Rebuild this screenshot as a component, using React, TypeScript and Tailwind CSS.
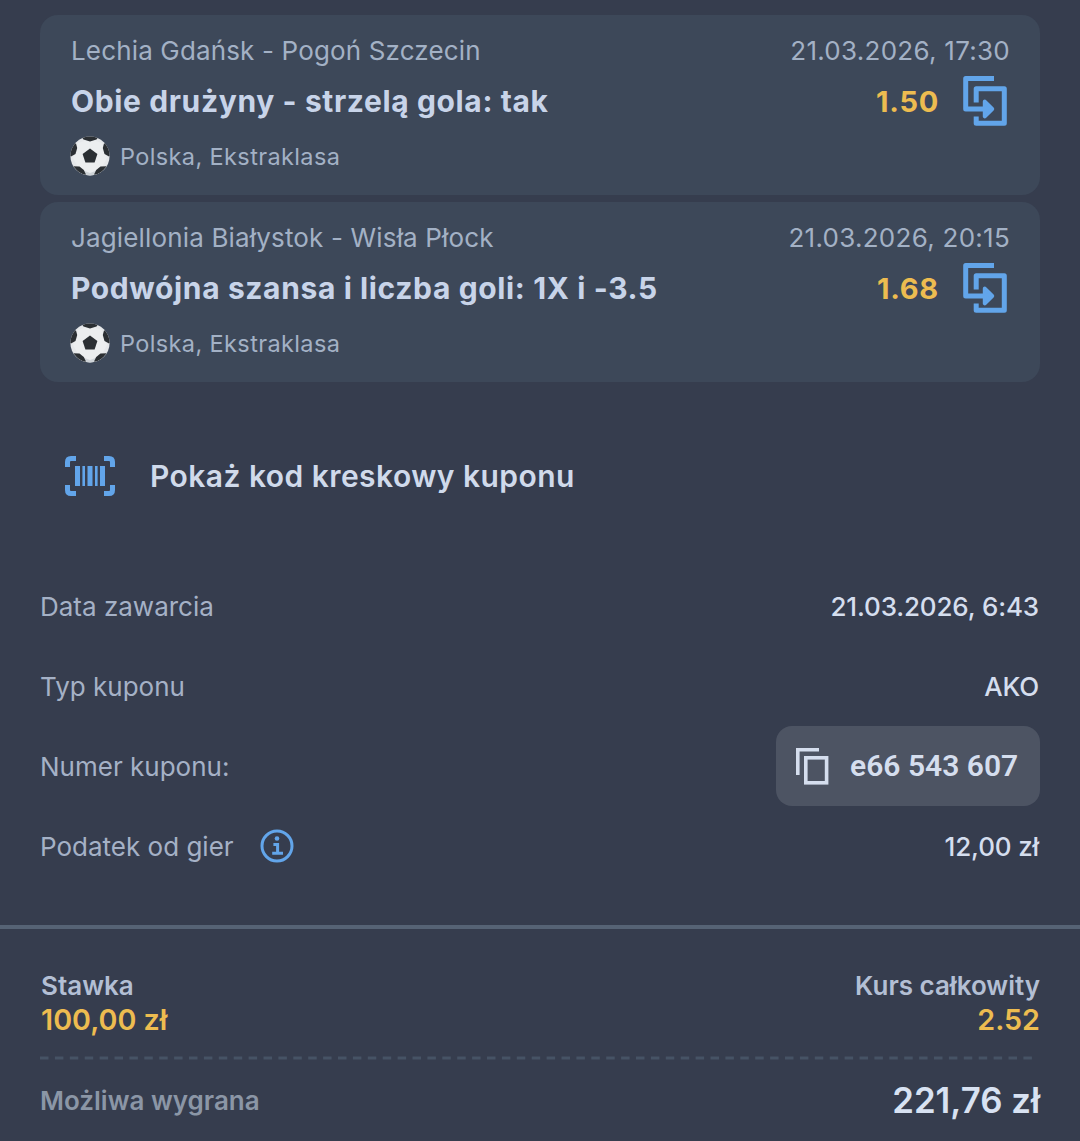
import clsx from 'clsx';
import type { ReactNode } from 'react';

interface Bet {
	match: string;
	date: string;
	pick: string;
	odds: string;
	league: string;
}

const BETS: Bet[] = [
	{
		match: 'Lechia Gdańsk - Pogoń Szczecin',
		date: '21.03.2026, 17:30',
		pick: 'Obie drużyny - strzelą gola: tak',
		odds: '1.50',
		league: 'Polska, Ekstraklasa',
	},
	{
		match: 'Jagiellonia Białystok - Wisła Płock',
		date: '21.03.2026, 20:15',
		pick: 'Podwójna szansa i liczba goli: 1X i -3.5',
		odds: '1.68',
		league: 'Polska, Ekstraklasa',
	},
];

function SoccerBall() {
	return (
		<svg viewBox="0 0 40 40" className="size-10 shrink-0">
			<defs>
				<clipPath id="ball">
					<circle cx="20" cy="20" r="19.6" />
				</clipPath>
			</defs>
			<g clipPath="url(#ball)">
				<rect width="40" height="40" fill="#e6e8ea" />
				<path d="M0 26L8 34H32L40 26V40H0Z" fill="#cfd4d8" />
				<path d="M8 7L20 3L32 7L37 22L31 33L20 37L9 33L3 22Z" fill="#eceeef" />
				<g fill="#2b2f33">
					<path d="M20 12.6L27.4 18L24.6 26.6H15.4L12.6 18Z" />
					<path d="M11 0H29L26.5 3.4L20 5.4L13.5 3.4Z" />
					<path d="M0 7L6 7.5L7.2 12L5.5 18L1 20.5L0 20Z" />
					<path d="M40 7L34 7.5L32.8 12L34.5 18L39 20.5L40 20Z" />
					<path d="M3 30.2L9.5 30.6L13.8 34L16 38.5L12 40Z" />
					<path d="M37 30.2L30.5 30.6L26.2 34L24 38.5L28 40Z" />
				</g>
			</g>
		</svg>
	);
}

function CopyBetIcon() {
	return (
		<svg viewBox="0 0 46 52" className="h-[52px] w-[46px]" fill="none" stroke="#62a5ea" strokeWidth="5">
			<path d="M32 3.5H3.7V34H25" strokeLinejoin="round" />
			<path d="M14.2 27.5V13.8H42.3V48.3H14.2V41.5" strokeLinejoin="round" />
			<path d="M22.8 26.6L30.2 34L22.8 41.4Z" fill="#62a5ea" strokeWidth="4" strokeLinejoin="round" />
		</svg>
	);
}

function BarcodeIcon() {
	return (
		<svg viewBox="0 0 50 40" className="h-10 w-[50px]" fill="none" stroke="#62a5ea">
			<g strokeWidth="5">
				<path d="M11 2.5H6Q2.5 2.5 2.5 6V11" />
				<path d="M39 2.5H44Q47.5 2.5 47.5 6V11" />
				<path d="M11 37.5H6Q2.5 37.5 2.5 34V29" />
				<path d="M39 37.5H44Q47.5 37.5 47.5 34V29" />
			</g>
			<path d="M12.5 10V30M25 10V30M37.5 10V30" strokeWidth="5" />
			<path d="M18.7 10V30M31.3 10V30" strokeWidth="2.6" />
		</svg>
	);
}

function CopyIcon() {
	return (
		<svg viewBox="0 0 33 37" className="h-[37px] w-[33px]" fill="none" stroke="#d5deee" strokeWidth="3.6">
			<path d="M23 1.8H1.8V27" />
			<rect x="9.8" y="9.8" width="20.8" height="25" />
		</svg>
	);
}

function InfoIcon() {
	return (
		<svg viewBox="0 0 34 34" className="size-[34px]" fill="none" stroke="#62a5ea" strokeWidth="3">
			<circle cx="17" cy="17" r="15" />
			<circle cx="17" cy="9.5" r="2.3" fill="#62a5ea" stroke="none" />
			<path d="M13.4 15.6H17.6V24M12.2 24.2H23" />
		</svg>
	);
}

function BetCard({ bet }: { bet: Bet }) {
	return (
		<article className="h-[180px] rounded-[18px] bg-[#3d4859] px-[30px] pt-[17px]">
			<div className="flex h-9 items-center justify-between text-[26px] text-[#a3b1c5]">
				<span className="pl-px tracking-[0.15px]">{bet.match}</span>
				<span className="tracking-[0.27px]">{bet.date}</span>
			</div>
			<div className="mt-[7px] flex h-[52px] items-center font-bold">
				<h2 className="flex-1 pl-px text-[30px] tracking-[0.62px] text-[#c8d4e9]">{bet.pick}</h2>
				<span className="mr-[23px] pt-0.5 text-[29px] tracking-[0.75px] text-[#edbc50]">{bet.odds}</span>
				<button className="mr-0.5">
					<CopyBetIcon />
				</button>
			</div>
			<div className="mt-[9px] flex h-10 items-center gap-2.5 text-[#a3b1c5]">
				<SoccerBall />
				<span className="pt-0.5 text-[23.5px] tracking-[0.38px]">{bet.league}</span>
			</div>
		</article>
	);
}

function DetailRow({ label, children }: { label: ReactNode; children: ReactNode }) {
	return (
		<div className="flex h-20 items-center justify-between">
			<div className="flex items-center gap-[26px] text-[26px] text-[#a5b1c6]">{label}</div>
			<div className="text-[26px] font-medium tracking-[-0.15px] text-[#d5deee]">{children}</div>
		</div>
	);
}

function Total({ label, value, right }: { label: string; value: string; right?: boolean }) {
	return (
		<div className={clsx('flex flex-col', right ? 'items-end text-right' : 'pl-px')}>
			<span className="text-[26px] leading-[34px] font-semibold text-[#b3bfd4]">{label}</span>
			<span className="text-[28.7px] leading-[34px] font-semibold text-[#edbc50]">{value}</span>
		</div>
	);
}

export default function App() {
	return (
		<main className="h-[1141px] w-[1080px] overflow-hidden bg-[#363d4e] font-['Inter',sans-serif]">
			<section className="flex flex-col gap-[7px] px-10 pt-[15px]">
				{BETS.map((bet) => (
					<BetCard key={bet.match} bet={bet} />
				))}
			</section>

			<button className="mt-[54px] ml-[65px] flex h-20 items-center gap-[35px]">
				<BarcodeIcon />
				<span className="text-[30px] font-semibold tracking-[0.45px] text-[#d0daeb]">Pokaż kod kreskowy kuponu</span>
			</button>

			<section className="mt-[50px] px-10">
				<DetailRow label="Data zawarcia">
					<span className="pr-px">21.03.2026, 6:43</span>
				</DetailRow>
				<DetailRow label="Typ kuponu">
					<span className="pr-px">AKO</span>
				</DetailRow>
				<DetailRow label="Numer kuponu:">
					<button className="flex h-20 w-[264px] items-center gap-[21px] rounded-[16px] bg-[#4d5463] pl-5">
						<CopyIcon />
						<span className="pb-0.5 font-['Roboto',sans-serif] text-[30px] font-semibold tracking-normal">e66 543 607</span>
					</button>
				</DetailRow>
				<DetailRow
					label={
						<>
							Podatek od gier
							<InfoIcon />
						</>
					}
				>
					<span className="pr-px">12,00 zł</span>
				</DetailRow>
			</section>

			<hr className="mt-[39px] border-0 border-t-4 border-[#566375]" />

			<footer className="px-10 pt-10">
				<div className="flex justify-between">
					<Total label="Stawka" value="100,00 zł" />
					<Total label="Kurs całkowity" value="2.52" right />
				</div>
				<svg className="mt-[19px] h-1 w-full" viewBox="0 0 1000 4">
					<path d="M0 2H993" stroke="#465365" strokeWidth="3" strokeDasharray="8.5 6.4" />
				</svg>
				<div className="flex h-20 items-center justify-between font-semibold">
					<span className="text-[26px] text-[#8b96a6]">Możliwa wygrana</span>
					<span className="text-[34.8px] text-[#d8e2f2]">221,76 zł</span>
				</div>
			</footer>
		</main>
	);
}
